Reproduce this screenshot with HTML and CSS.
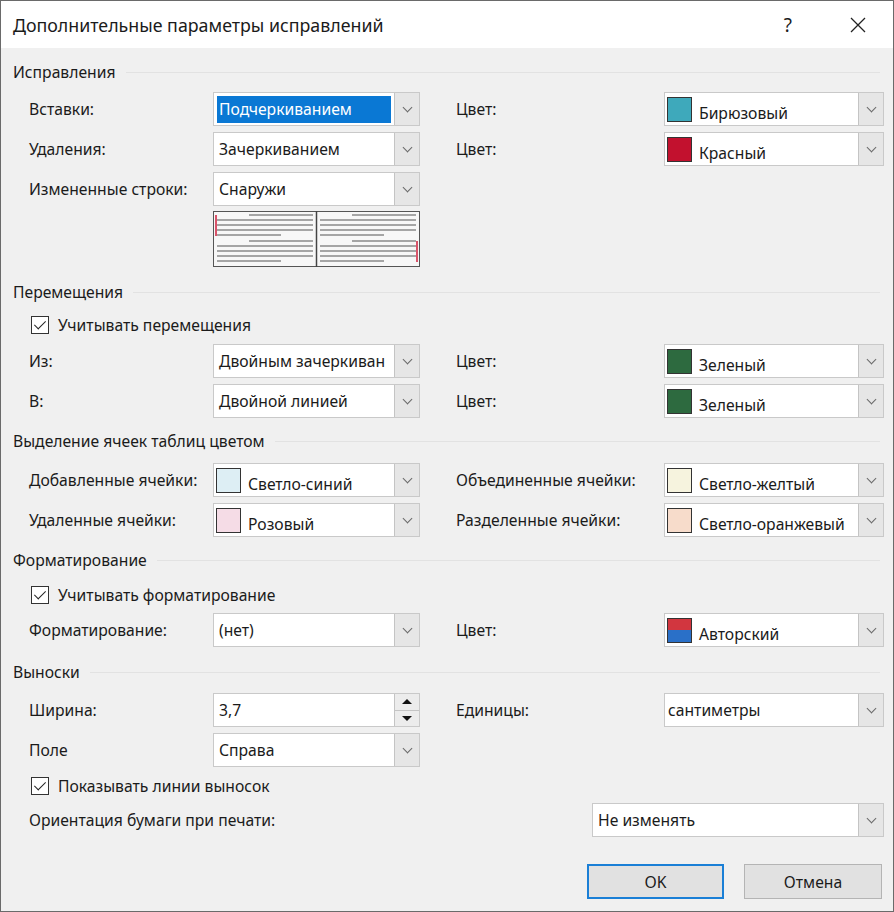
FILE: index.html
```html
<!DOCTYPE html>
<html lang="ru">
<head>
    <meta charset="UTF-8">
    <title>Дополнительные параметры исправлений</title>
    <link rel="stylesheet" href="styles.css">
</head>
<body>
<div class="dialog">
    <div class="titlebar">
        <span class="title">Дополнительные параметры исправлений</span>
        <span class="help">?</span>
        <svg class="close" width="16" height="16" viewBox="0 0 16 16"><path d="M1 1 L15 15 M15 1 L1 15" stroke="#222" stroke-width="1.3" fill="none"/></svg>
    </div>

    <div class="content">
        <!-- Исправления -->
        <div class="section-head s1">Исправления</div>
        <div class="row r-first">
            <span class="label">Вставки:</span>
            <div class="combo"><span class="value selected">Подчеркиванием</span><span class="drop"></span></div>
            <span class="label label-right">Цвет:</span>
            <div class="combo combo-right"><span class="swatch turquoise"></span><span class="value low">Бирюзовый</span><span class="drop"></span></div>
        </div>
        <div class="row">
            <span class="label">Удаления:</span>
            <div class="combo"><span class="value">Зачеркиванием</span><span class="drop"></span></div>
            <span class="label label-right">Цвет:</span>
            <div class="combo combo-right"><span class="swatch red"></span><span class="value low">Красный</span><span class="drop"></span></div>
        </div>
        <div class="row">
            <span class="label">Измененные строки:</span>
            <div class="combo"><span class="value">Снаружи</span><span class="drop"></span></div>
        </div>
        <div class="preview-row">
            <svg class="preview" width="207" height="56" viewBox="0 0 207 56">
                <rect x="0.5" y="0.5" width="206" height="55" fill="#f7f7f7" stroke="#555"/>
                <line x1="103.5" y1="0" x2="103.5" y2="56" stroke="#444" stroke-width="1.5"/>
                <g stroke="#8a8a8a" stroke-width="1.4">
                    <line x1="36" y1="4" x2="100" y2="4"/>
                    <line x1="4" y1="9" x2="100" y2="9"/>
                    <line x1="4" y1="14" x2="100" y2="14"/>
                    <line x1="4" y1="19" x2="100" y2="19"/>
                    <line x1="4" y1="24" x2="68" y2="24"/>
                    <line x1="36" y1="30" x2="100" y2="30"/>
                    <line x1="4" y1="35" x2="100" y2="35"/>
                    <line x1="4" y1="40" x2="100" y2="40"/>
                    <line x1="4" y1="45" x2="100" y2="45"/>
                    <line x1="4" y1="50" x2="68" y2="50"/>
                    <line x1="139" y1="4" x2="203" y2="4"/>
                    <line x1="107" y1="9" x2="203" y2="9"/>
                    <line x1="107" y1="14" x2="203" y2="14"/>
                    <line x1="107" y1="19" x2="203" y2="19"/>
                    <line x1="107" y1="24" x2="171" y2="24"/>
                    <line x1="139" y1="30" x2="203" y2="30"/>
                    <line x1="107" y1="35" x2="203" y2="35"/>
                    <line x1="107" y1="40" x2="203" y2="40"/>
                    <line x1="107" y1="45" x2="203" y2="45"/>
                    <line x1="107" y1="50" x2="171" y2="50"/>
                </g>
                <line x1="3" y1="4" x2="3" y2="25" stroke="#d9546a" stroke-width="2"/>
                <line x1="204" y1="30" x2="204" y2="51" stroke="#d9546a" stroke-width="2"/>
            </svg>
        </div>

        <!-- Перемещения -->
        <div class="section-head s2">Перемещения</div>
        <div class="check-row c1"><span class="check"></span>Учитывать перемещения</div>
        <div class="row r-after-check">
            <span class="label">Из:</span>
            <div class="combo"><span class="value">Двойным зачеркиван</span><span class="drop"></span></div>
            <span class="label label-right">Цвет:</span>
            <div class="combo combo-right"><span class="swatch green"></span><span class="value low">Зеленый</span><span class="drop"></span></div>
        </div>
        <div class="row">
            <span class="label">В:</span>
            <div class="combo"><span class="value">Двойной линией</span><span class="drop"></span></div>
            <span class="label label-right">Цвет:</span>
            <div class="combo combo-right"><span class="swatch green"></span><span class="value low">Зеленый</span><span class="drop"></span></div>
        </div>

        <!-- Выделение ячеек -->
        <div class="section-head s3">Выделение ячеек таблиц цветом</div>
        <div class="row r-cells">
            <span class="label">Добавленные ячейки:</span>
            <div class="combo"><span class="swatch light-blue"></span><span class="value low">Светло-синий</span><span class="drop"></span></div>
            <span class="label label-right">Объединенные ячейки:</span>
            <div class="combo combo-right"><span class="swatch light-yellow"></span><span class="value low">Светло-желтый</span><span class="drop"></span></div>
        </div>
        <div class="row">
            <span class="label">Удаленные ячейки:</span>
            <div class="combo"><span class="swatch pink"></span><span class="value low">Розовый</span><span class="drop"></span></div>
            <span class="label label-right">Разделенные ячейки:</span>
            <div class="combo combo-right"><span class="swatch light-orange"></span><span class="value low">Светло-оранжевый</span><span class="drop"></span></div>
        </div>

        <!-- Форматирование -->
        <div class="section-head s4">Форматирование</div>
        <div class="check-row c2"><span class="check"></span>Учитывать форматирование</div>
        <div class="row r-fmt">
            <span class="label">Форматирование:</span>
            <div class="combo"><span class="value">(нет)</span><span class="drop"></span></div>
            <span class="label label-right">Цвет:</span>
            <div class="combo combo-right"><span class="swatch author"></span><span class="value low">Авторский</span><span class="drop"></span></div>
        </div>

        <!-- Выноски -->
        <div class="section-head s5">Выноски</div>
        <div class="row r-callout">
            <span class="label">Ширина:</span>
            <div class="combo spin"><span class="value">3,7</span><span class="spin-btns"><span class="up"></span><span class="down"></span></span></div>
            <span class="label label-right">Единицы:</span>
            <div class="combo combo-right"><span class="value flush">сантиметры</span><span class="drop"></span></div>
        </div>
        <div class="row">
            <span class="label">Поле</span>
            <div class="combo"><span class="value">Справа</span><span class="drop"></span></div>
        </div>
        <div class="check-row c3"><span class="check"></span>Показывать линии выносок</div>
        <div class="row r-orient">
            <span class="label label-wide">Ориентация бумаги при печати:</span>
            <div class="combo combo-wide"><span class="value">Не изменять</span><span class="drop"></span></div>
        </div>

        <div class="buttons">
            <button class="btn btn-default">OK</button>
            <button class="btn">Отмена</button>
        </div>
    </div>
</div>
</body>
</html>
```

FILE: styles.css
```css
* {
    box-sizing: border-box;
}
html, body {
    margin: 0;
    padding: 0;
}
body {
    font-family: 'Noto Sans', 'Open Sans', Arial, sans-serif;
    font-size: 15.7px;
    color: #1b1b1b;
    background: #f0f0f0;
}
.dialog {
    width: 894px;
    height: 912px;
    border: 1px solid #6a6a6a;
    background: #f0f0f0;
    overflow: hidden;
}
.titlebar {
    height: 47px;
    background: #fff;
    display: flex;
    align-items: center;
    padding-left: 12px;
}
.title {
    font-size: 17.8px;
    flex: 1;
}
.help {
    font-size: 19px;
    margin-right: 58px;
}
.close {
    margin-right: 27px;
}
.content {
    padding: 0 9px 0 12px;
}
.section-head {
    display: flex;
    align-items: center;
    height: 20px;
    white-space: nowrap;
}
.section-head::after {
    content: "";
    flex: 1;
    height: 1px;
    background: #e2e2e2;
    margin-left: 10px;
    margin-right: 4px;
}
.s1 { margin-top: 14px; }
.s2 { margin-top: 15px; }
.s3 { margin-top: 13px; }
.s4 { margin-top: 13px; }
.s5 { margin-top: 15px; }

.row {
    display: flex;
    align-items: center;
    height: 34px;
    margin-top: 6px;
    padding-left: 16px;
}
.r-first { margin-top: 10px; }
.r-after-check { margin-top: 8px; }
.r-cells { margin-top: 12px; }
.r-fmt { margin-top: 7px; }
.r-callout { margin-top: 11px; }

.label {
    width: 184px;
    flex: none;
    white-space: nowrap;
}
.label-right {
    width: 244px;
    padding-left: 36px;
}
.label-wide {
    width: 563px;
}

.combo {
    width: 207px;
    height: 34px;
    flex: none;
    display: flex;
    align-items: center;
    background: #fff;
    border: 1px solid #c9c9c9;
    position: relative;
    overflow: hidden;
}
.combo-right {
    width: 220px;
}
.combo-wide {
    width: 292px;
}
.value {
    flex: 1;
    padding-left: 5px;
    white-space: nowrap;
    overflow: hidden;
}
.value.flush {
    padding-left: 3px;
}
.value.low {
    padding-top: 8px;
    padding-left: 7px;
}
.value.selected {
    flex: none;
    width: 174px;
    margin-left: 3px;
    padding-left: 2px;
    height: 27px;
    line-height: 27px;
    background: #0a78d4;
    color: #fff;
}
.drop {
    width: 25px;
    height: 100%;
    flex: none;
    margin-left: auto;
    background: #e6e6e6;
    border-left: 1px solid #c4c4c4;
    display: flex;
    align-items: center;
    justify-content: center;
}
.drop::after {
    content: "";
    width: 6px;
    height: 6px;
    border-right: 1px solid #6a6a6a;
    border-bottom: 1px solid #6a6a6a;
    transform: rotate(45deg);
    margin-top: -4px;
}

.swatch {
    width: 25px;
    height: 25px;
    flex: none;
    margin-left: 2px;
    border: 1px solid #333;
}
.turquoise { background: #3ea9bb; }
.red { background: #c2112e; }
.green { background: #2d6a3f; }
.light-blue { background: #ddeef4; }
.light-yellow { background: #f6f3de; }
.pink { background: #f5dce6; }
.light-orange { background: #f7dccb; }
.author { background: linear-gradient(#d2363f 0 48%, #2a70c8 48% 100%); }

.spin-btns {
    width: 25px;
    height: 100%;
    flex: none;
    display: flex;
    flex-direction: column;
    background: #ececec;
    border-left: 1px solid #c4c4c4;
}
.spin-btns span {
    flex: 1;
    display: flex;
    align-items: center;
    justify-content: center;
}
.spin-btns .up {
    border-bottom: 1px solid #c4c4c4;
}
.spin-btns .up::after {
    content: "";
    border-left: 5px solid transparent;
    border-right: 5px solid transparent;
    border-bottom: 5px solid #111;
}
.spin-btns .down::after {
    content: "";
    border-left: 5px solid transparent;
    border-right: 5px solid transparent;
    border-top: 5px solid #111;
}

.preview-row {
    padding-left: 200px;
    margin-top: 5px;
    height: 56px;
}
.preview {
    display: block;
}

.check-row {
    display: flex;
    align-items: center;
    height: 22px;
    padding-left: 18px;
    white-space: nowrap;
}
.c1 { margin-top: 12px; }
.c2 { margin-top: 14px; }
.c3 { margin-top: 8px; }
.check {
    width: 18px;
    height: 18px;
    border: 1px solid #333;
    background: #fff;
    margin-right: 9px;
    position: relative;
}
.check::after {
    content: "";
    position: absolute;
    left: 5px;
    top: 1px;
    width: 5px;
    height: 10px;
    border-right: 1.5px solid #222;
    border-bottom: 1.5px solid #222;
    transform: rotate(45deg);
}

.buttons {
    display: flex;
    justify-content: flex-end;
    gap: 20px;
    margin-top: 27px;
    padding-right: 2px;
}
.btn {
    font-family: inherit;
    font-size: 15.7px;
    color: #1b1b1b;
    height: 35px;
    width: 138px;
    background: #e1e1e1;
    border: 1px solid #b4b4b4;
    padding: 0;
}
.btn-default {
    width: 137px;
    border: 2px solid #1a7fd6;
}
```
